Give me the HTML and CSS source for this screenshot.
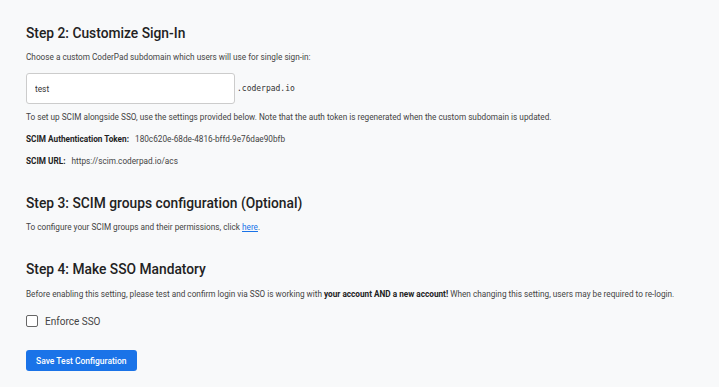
FILE: index.html
```html
<!DOCTYPE html>
<html lang="en">
<head>
    <meta charset="UTF-8">
    <meta name="viewport" content="width=device-width, initial-scale=1.0">
    <title>SSO Settings</title>
    <link rel="stylesheet" href="styles.css">
</head>
<body>
    <div class="page">
        <section class="step">
            <h2>Step 2: Customize Sign-In</h2>
            <p>Choose a custom CoderPad subdomain which users will use for single sign-in:</p>
            <div class="subdomain">
                <input type="text" class="subdomain-input" value="test">
                <span class="suffix">.coderpad.io</span>
            </div>
            <p>To set up SCIM alongside SSO, use the settings provided below. Note that the auth token is regenerated when the custom subdomain is updated.</p>
            <p class="field"><b>SCIM Authentication Token:</b> 180c620e-68de-4816-bffd-9e76dae90bfb</p>
            <p class="field"><b>SCIM URL:</b> https://scim.coderpad.io/acs</p>
        </section>
        <section class="step">
            <h2>Step 3: SCIM groups configuration (Optional)</h2>
            <p>To configure your SCIM groups and their permissions, click <a href="#">here</a>.</p>
        </section>
        <section class="step">
            <h2 class="last-title">Step 4: Make SSO Mandatory</h2>
            <p>Before enabling this setting, please test and confirm login via SSO is working with <b>your account AND a new account!</b> When changing this setting, users may be required to re-login.</p>
            <label class="check"><span class="box"></span>Enforce SSO</label>
            <button class="save">Save Test Configuration</button>
        </section>
    </div>
</body>
</html>
```

FILE: styles.css
```css
body {
    margin: 0;
    background: #f8f9fa;
    font-family: Roboto, "Liberation Sans", sans-serif;
    color: #333;
}
.page {
    padding: 25px 26px 0;
}
.step {
    margin-bottom: 28px;
}
.step:last-child {
    margin-bottom: 0;
}
h2 {
    font-size: 13.8px;
    font-weight: 500;
    color: #222;
    margin: 0 0 10px;
}
h2.last-title {
    margin-bottom: 11px;
}
p {
    font-size: 8.22px;
    line-height: 12px;
    margin: 0 0 10px;
    color: #444;
}
p b {
    color: #222;
    font-weight: 700;
}
.field b {
    margin-right: 4px;
}
a {
    color: #1a73e8;
}
.subdomain {
    display: flex;
    align-items: center;
    margin: 0 0 7px;
}
.subdomain-input {
    width: 209px;
    height: 31px;
    box-sizing: border-box;
    border: 1px solid #ccc;
    border-radius: 3px;
    padding: 0 8px;
    font-family: Roboto, sans-serif;
    font-size: 8.3px;
    color: #333;
    background: #fff;
}
.suffix {
    font-family: "DejaVu Sans Mono", monospace;
    font-size: 8px;
    color: #333;
    margin-left: 2px;
}
.check {
    display: flex;
    align-items: center;
    font-size: 10px;
    color: #444;
    margin: 15px 0 23px;
}
.box {
    width: 10px;
    height: 10px;
    border: 1px solid #666;
    border-radius: 2px;
    background: #fff;
    margin-right: 7px;
}
.save {
    display: block;
    background: #1a73e8;
    color: #fff;
    border: none;
    border-radius: 3px;
    font-family: Roboto, sans-serif;
    font-size: 8.5px;
    font-weight: 500;
    height: 21px;
    padding: 0 10px;
}
```
